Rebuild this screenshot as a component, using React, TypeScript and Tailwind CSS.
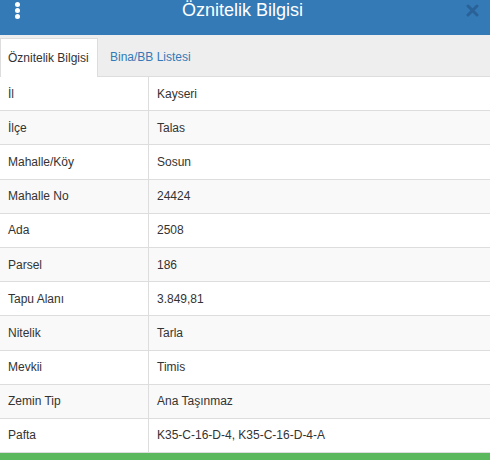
import React from "react";

const rows: [string, string][] = [
  ["İl", "Kayseri"],
  ["İlçe", "Talas"],
  ["Mahalle/Köy", "Sosun"],
  ["Mahalle No", "24424"],
  ["Ada", "2508"],
  ["Parsel", "186"],
  ["Tapu Alanı", "3.849,81"],
  ["Nitelik", "Tarla"],
  ["Mevkii", "Timis"],
  ["Zemin Tip", "Ana Taşınmaz"],
  ["Pafta", "K35-C-16-D-4, K35-C-16-D-4-A"],
];

export default function App() {
  return (
    <div className="w-[490px] h-[460px] overflow-hidden bg-white text-[#333] font-['Liberation_Sans',Arial,sans-serif]">
      <div className="relative h-[35px] bg-[#337ab7] flex items-start justify-center pt-[1px] pr-[5px]">
        <div className="absolute left-[15px] top-[2px] flex flex-col gap-[1px]">
          <span className="block w-[5px] h-[5px] rounded-full bg-white" />
          <span className="block w-[5px] h-[5px] rounded-full bg-white" />
          <span className="block w-[5px] h-[5px] rounded-full bg-white" />
        </div>
        <span className="text-white text-[18px] leading-none">Öznitelik Bilgisi</span>
        <svg className="absolute right-[11px] top-[4px]" width="13" height="13" viewBox="0 0 13 13">
          <path d="M2 2 L11 11 M11 2 L2 11" stroke="#2a6196" strokeWidth="3" strokeLinecap="round" />
        </svg>
      </div>
      <div className="h-[42px] bg-[#eeeeee] flex items-end border-b border-[#dddddd]">
        <div className="h-[39px] w-[98px] bg-white border border-b-0 border-[#dddddd] flex items-center px-[7px] text-[12px] -mb-px">
          Öznitelik Bilgisi
        </div>
        <div className="h-[39px] flex items-center px-[12px] text-[12px] text-[#337ab7]">
          Bina/BB Listesi
        </div>
      </div>
      <div>
        {rows.map(([k, v], i) => (
          <div
            key={k}
            className={`flex h-[34.2px] border-b border-[#dddddd] text-[12px] ${i % 2 === 1 ? "bg-[#f9f9f9]" : "bg-white"}`}
          >
            <div className="w-[149px] shrink-0 border-r border-[#dddddd] flex items-center px-[8px]">{k}</div>
            <div className="flex-1 flex items-center px-[8px]">{v}</div>
          </div>
        ))}
      </div>
      <div className="h-[10px] bg-[#5cb85c]" />
    </div>
  );
}
